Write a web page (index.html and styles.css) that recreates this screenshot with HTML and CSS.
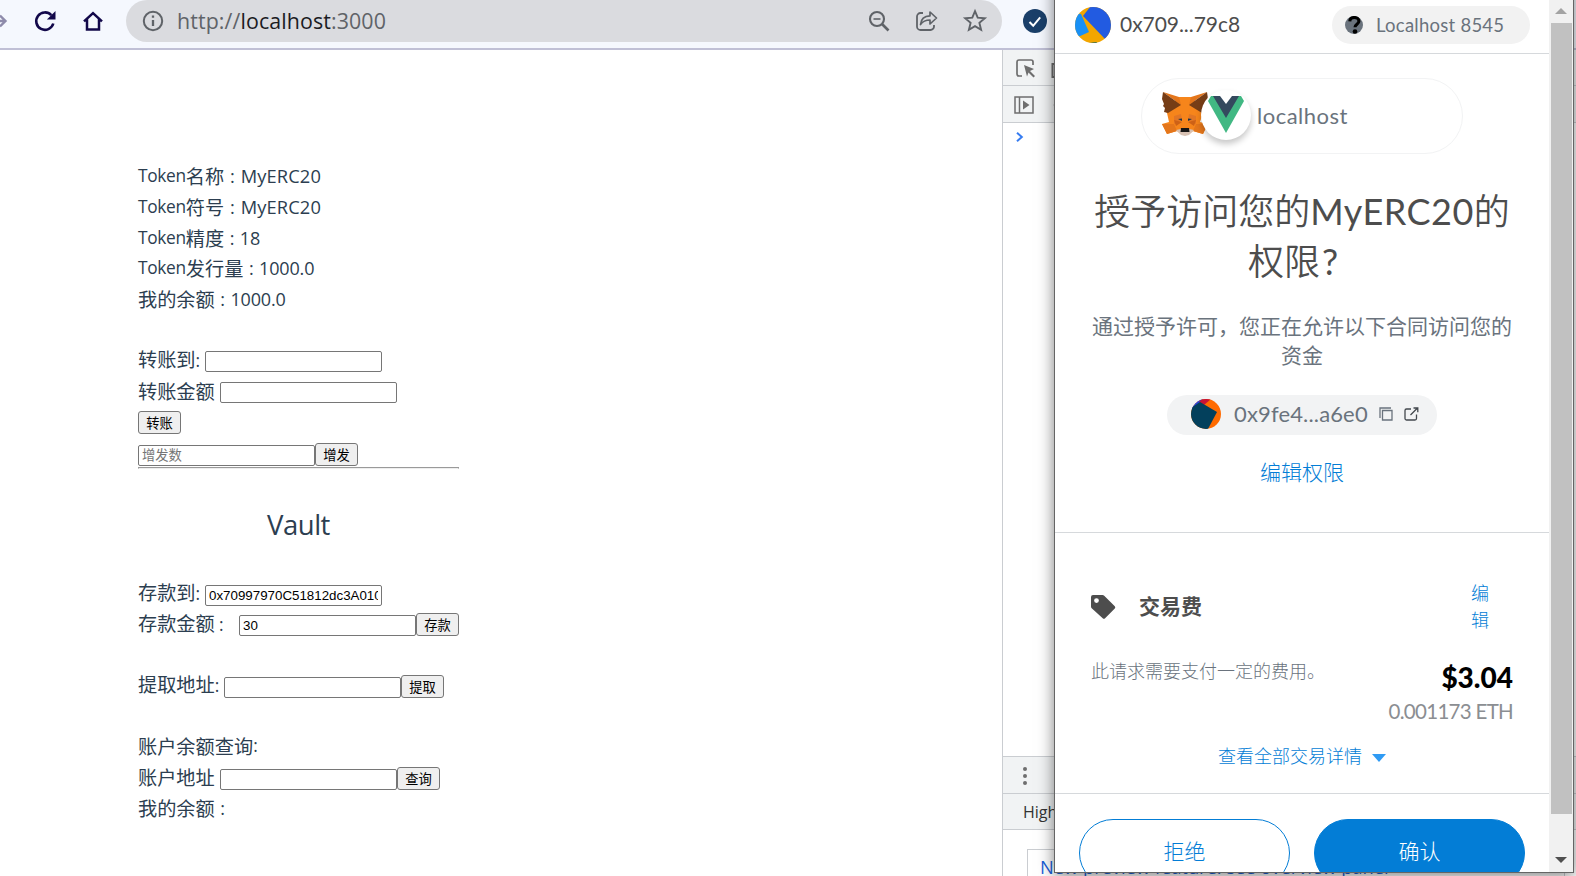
FILE: index.html
```html
<!DOCTYPE html>
<html lang="zh-CN">
<head>
<meta charset="utf-8">
<title>Vault</title>
<link rel="stylesheet" href="styles.css">
</head>
<body>
<div class="screen">
  <header class="toolbar">
    <svg class="nav-icons" width="126" height="48" viewBox="0 0 126 48" fill="none">
      <path d="M-6 21H5M0 15.500l5.500 5.500-5.500 5.500" stroke="#8e8bab" stroke-width="2.400"/>
      <path d="M53.300 23.500A8.700 8.700 0 1 1 51.300 15.200" stroke="#12084a" stroke-width="2.600"/>
      <path d="M55.500 11v8.600h-8.600z" fill="#12084a"/>
      <path d="M84 21.300l9-8.200 9 8.200M87 19v10.600h12V19" stroke="#12084a" stroke-width="2.500"/>
    </svg>
    <div class="omnibox">
      <svg width="22" height="22" viewBox="0 0 22 22" fill="none"><circle cx="11" cy="11" r="9.200" stroke="#5f6368" stroke-width="2"/><path d="M11 10v6M11 5.500v2.300" stroke="#5f6368" stroke-width="2.300"/></svg>
      <span class="url">http://<b>localhost</b>:3000</span>
      <svg class="omni-actions" width="122" height="26" viewBox="0 0 122 26" fill="none" stroke="#5f6368">
        <circle cx="9" cy="11" r="7" stroke-width="2.100"/><path d="M5.500 11h7" stroke-width="1.600"/><path d="M14 16l6.500 6.500" stroke-width="2.600"/>
        <path d="M55 5h-2.500a3.500 3.500 0 0 0-3.500 3.500v10a3.500 3.500 0 0 0 3.500 3.500h10a3.500 3.500 0 0 0 3.500-3.500V17" stroke-width="1.800"/>
        <path d="M52.500 16.500c.5-5.500 3.500-8.500 9.500-8.700V4l6.500 6-6.500 6v-4c-4 0-7 1-9.500 4.500z" stroke-width="1.700" stroke-linejoin="round"/>
        <path d="M107 3.200l2.700 6.500 7.100.6-5.400 4.600 1.700 6.900-6.100-3.700-6.100 3.700 1.700-6.900-5.400-4.600 7.100-.6z" stroke-width="1.900"/>
      </svg>
    </div>
    <svg class="ext" width="24" height="24" viewBox="0 0 24 24"><circle cx="12" cy="12" r="12" fill="#1a3f69"/><path d="M6.500 13l3.700 3.800 7-8.500" fill="none" stroke="#fff" stroke-width="2"/></svg>
  </header>

  <div class="body">
    <main class="page">
      <section class="group token">
        <p><span class="lat">Token</span>名称<span class="lat wide"> : MyERC20</span></p>
        <p><span class="lat">Token</span>符号<span class="lat wide"> : MyERC20</span></p>
        <p><span class="lat">Token</span>精度<span class="lat num"> : 18</span></p>
        <p><span class="lat">Token</span>发行量<span class="lat num"> : 1000.0</span></p>
        <p>我的余额<span class="lat num"> : 1000.0</span></p>
        <p></p>
        <p><label class="w67">转账到<span class="lat">:</span></label><input></p>
        <p><label class="w82">转账金额</label><input></p>
        <p><button>转账</button></p>
        <p class="mint"><input placeholder="增发数"><button>增发</button></p>
      </section>
      <hr>
      <h2>Vault</h2>
      <section class="group vault">
        <p><label class="w67">存款到<span class="lat">:</span></label><input value="0x70997970C51812dc3A010C7d01b50e0d17dc79C8"></p>
        <p><label class="w101">存款金额<span class="lat"> :</span></label><input value="30"><button>存款</button></p>
        <p></p>
        <p><label class="w86">提取地址<span class="lat">:</span></label><input><button>提取</button></p>
        <p></p>
        <p>账户余额查询<span class="lat">:</span></p>
        <p><label class="w82">账户地址</label><input><button>查询</button></p>
        <p>我的余额<span class="lat num"> :</span></p>
      </section>
    </main>

    <aside class="devtools">
      <div class="bar bar-top">
        <svg width="40" height="34" viewBox="0 0 40 34" fill="none" stroke="#6e6e6e" stroke-width="1.700"><path d="M6 24H3a2 2 0 0 1-2-2V10a2 2 0 0 1 2-2h12a2 2 0 0 1 2 2v3"/><path d="M8 13l10 4-4 2 5 5-1.500 1.500-5-5-1.500 4z" fill="#6e6e6e" stroke="none"/><path d="M40 12h-3.500v13H40" stroke-width="2"/></svg>
      </div>
      <div class="bar bar-side">
        <svg width="48" height="20" viewBox="0 0 48 20" fill="none" stroke="#6e6e6e" stroke-width="1.500"><path d="M1 2h18v16H1zM5.500 2v16"/><path d="M9 5.500v9l6.500-4.500z" fill="#6e6e6e" stroke="none"/><circle cx="44" cy="10" r="3.500"/></svg>
      </div>
      <div class="console">
        <svg width="8" height="10" viewBox="0 0 8 10" fill="none"><path d="M1 .8L5.800 5 1 9.200" stroke="#367cf1" stroke-width="2"/></svg>
      </div>
      <div class="bar bar-menu"><i></i><i></i><i></i></div>
      <div class="bar bar-tab">Highlights</div>
      <div class="notes"><div class="note">New preview feature: see overview panel</div></div>
    </aside>
  </div>

  <div class="popup">
    <div class="wallet">
      <div class="account">
        <svg width="36" height="36" viewBox="0 0 36 36"><defs><clipPath id="av"><circle cx="18" cy="18" r="18"/></clipPath></defs><g clip-path="url(#av)"><path fill="#f3a600" d="M0 0h36v36H0z"/><path fill="#1890f5" d="M0 6l6 1 8 18-11 5-5-4z"/><path fill="#225be1" d="M15 0L8 9l22 23 8-3V0z"/><path fill="#045b5b" d="M14 36l8-1-1 2z"/></g></svg>
        <span class="acct-name">0x709...79c8</span>
        <span class="network"><svg width="18" height="18" viewBox="0 0 18 18"><circle cx="9" cy="9" r="9" fill="#6a737d"/><path d="M4.800 5.300C5 2.500 7 1.500 9.300 1.500c2.600 0 4.600 1.500 4.600 3.700 0 3-3.900 3-3.900 6" fill="none" stroke="#000" stroke-width="3.100"/><circle cx="10" cy="15.500" r="2.300"/></svg><span>Localhost 8545</span></span>
      </div>
      <div class="approve">
        <div class="origin">
          <svg class="fox" width="48" height="46" viewBox="0 0 48 46">
            <path fill="#f6851b" d="M17 6h14l11 16-3 9 7 2-4 10-10-3-5 4h-6l-5-4-10 3-5-10 7-2-2-9L5 21z"/>
            <path fill="#e4761b" d="M1 33h12l3 7-10 3zM47 33H35l-3 7 10 3z"/>
            <path fill="#e4761b" d="M2 1l18 13-2-8zM46 1L28 14l2-8z"/>
            <path fill="#763d16" d="M2 1l18 13-13 8-4-1 1-4-2-2 1-2-2-5zM46 1L28 14l13 8 4-1-1-4 2-2-1-2 2-5z"/>
            <path fill="#e27625" d="M13 25l7-2 1 6-8 4zM35 25l-7-2-1 6 8 4z"/>
            <path fill="#cd6116" d="M13 29l8 2-6 4zM35 29l-8 2 6 4z"/>
            <path fill="#d7c1b3" d="M15 39l5-1h8l5 1-5 5-4 1-4-1z"/>
            <path fill="#161616" d="M20 37h8l.5 4h-9z"/><path fill="#233447" d="M17 28l4-.5v2.500zM31 28l-4-.5v2.500z"/>
          </svg>
          <span class="vue"><svg width="38" height="38" viewBox="0 0 38 38"><path fill="#41b883" d="M4 1h7l8 15 8-15h7l3 5-18 32L1 6z"/><path fill="#34495e" d="M6 1h7l6 8 6-8h7L19 23z"/></svg></span>
          <span class="host">localhost</span>
        </div>
        <h1>授予访问您的<span>MyERC20</span>的<br>权限<span class="mark">?</span></h1>
        <p class="desc">通过授予许可，您正在允许以下合同访问您的<br>资金</p>
        <div class="contract">
          <svg width="30" height="30" viewBox="0 0 30 30"><defs><clipPath id="ct"><circle cx="15" cy="15" r="15"/></clipPath></defs><g clip-path="url(#ct)"><path fill="#ff6b00" d="M0 0h30v30H0z"/><path fill="#2a43dd" d="M0 0h12l-4 5-6 5H0z"/><path fill="#c81435" d="M11 0h9l-7 6-5-3z"/><path fill="#03405c" d="M0 9l9-6 17 10-9 17H0z"/></g></svg>
          <span class="addr">0x9fe4...a6e0</span>
          <svg class="links" width="40" height="14" viewBox="0 0 40 14" fill="none" stroke="#6a737d" stroke-width="1.300"><path d="M1 11V1h11M3.500 3.500H13V13H3.500z"/><path d="M32 2h-4.500a1.500 1.500 0 0 0-1.500 1.500v8A1.500 1.500 0 0 0 27.500 13h8.500a1.500 1.500 0 0 0 1.500-1.500V7.500M31.500 8l7-7M34.500 1h4.300v4.300" stroke="#43484d"/></svg>
        </div>
        <a class="edit-perm">编辑权限</a>
      </div>
      <div class="fees">
        <div class="fee-head">
          <svg width="25" height="25" viewBox="0 0 25 25"><path fill="#4d4d4d" fill-rule="evenodd" d="M2 0h9.500q1 0 1.700.7l10.600 10.500q1 1.200 0 2.400l-9.700 9.700q-1.200 1-2.400 0L.7 13.200Q0 12.500 0 11.500V2Q0 0 2 0zM5.500 3.200a2.400 2.400 0 1 0 0 4.800 2.400 2.400 0 0 0 0-4.800z"/></svg>
          <strong>交易费</strong>
          <a>编<br>辑</a>
        </div>
        <div class="fee-row">
          <span class="fee-note">此请求需要支付一定的费用。</span>
          <div class="amounts"><b>$3.04</b><span>0.001173 ETH</span></div>
        </div>
        <a class="details">查看全部交易详情<i></i></a>
      </div>
      <div class="footer"><a class="btn reject">拒绝</a><a class="btn confirm">确认</a></div>
    </div>
    <div class="scrollbar"><i class="up"></i><div class="thumb"></div><i class="down"></i></div>
  </div>
</div>
</body>
</html>
```
FILE: styles.css
```css
* { box-sizing: border-box; }
body { margin: 0; background: #fff; font-family: "Noto Sans CJK SC", sans-serif; }
p, h1, h2 { margin: 0; font-weight: 400; }
svg { flex: none; display: block; }

.screen { position: relative; width: 1576px; height: 876px; overflow: hidden; display: flex; flex-direction: column; }

.toolbar { height: 50px; flex: none; display: flex; background: #f5f8fe; border-bottom: 2px solid #c0c0d6; }
.omnibox { width: 876px; height: 42px; flex: none; display: flex; align-items: center; padding: 0 12px 0 16px; background: #dadbdf; border-radius: 21px; }
.url { margin-left: 13px; font: 21.400px/42px "Open Sans", sans-serif; letter-spacing: .1px; color: #5f6368; }
.url b { font-weight: 400; color: #1b1c1f; }
.omni-actions { margin-left: auto; }
.ext { margin: 9px 0 0 21px; }

.body { flex: 1; min-height: 0; display: flex; }
.page { width: 1002px; flex: none; padding: 111px 0 0 138px; color: #2c3e50; }
.group { font-size: 19.200px; font-weight: 300; }
.group p { height: 30.700px; display: flex; align-items: center; white-space: pre; line-height: 30px; }
.token { height: 306px; }
.vault p { height: 30.640px; }
.lat { font-family: "Open Sans", sans-serif; font-size: 17.300px; font-weight: 400; letter-spacing: -.3px; }
.wide { font-size: 18.300px; letter-spacing: .1px; word-spacing: 1px; }
.num { font-size: 18px; letter-spacing: -.15px; word-spacing: 1px; }
.w67 { width: 67px; }
.w82 { width: 82px; }
.w101 { width: 101px; }
.w86 { width: 86px; }
.group input { width: 177px; height: 21px; margin: 3px 0 0; padding: 1px 3px; border: 1px solid #767676; border-radius: 2px; background: #fff; color: #000; font: 13.333px "Liberation Sans", "Noto Sans CJK SC", sans-serif; }
.vault input { margin-top: 4px; }
.group input::placeholder { color: #757575; font: 400 13.300px "Noto Sans CJK SC", sans-serif; }
.group button { width: 43px; height: 23px; margin: 2px 0 0; padding: 0; border: 1px solid #767676; border-radius: 3px; background: #efefef; color: #000; font: 400 13.300px/19px "Noto Sans CJK SC", sans-serif; }
.group.token .mint input { margin-top: 5px; }
.mint button { margin-top: 4px; }
hr { width: 321px; height: 2px; margin: 0; border: 1px solid #9a9a9a; border-bottom-color: #eee; }
h2 { width: 321px; height: 109px; text-align: center; font: 27.500px/111px "Open Sans", sans-serif; letter-spacing: -.5px; }

.devtools { flex: 1; min-width: 0; display: flex; flex-direction: column; border-left: 1px solid #cacdd1; color: #333; font-family: "Open Sans", sans-serif; }
.bar { flex: none; display: flex; background: #f1f3f4; border-bottom: 1px solid #cacdd1; }
.bar-top { height: 36px; padding: 2px 0 0 13px; }
.bar-side { height: 37px; align-items: center; padding: 1px 0 0 11px; }
.console { flex: 1; padding: 9px 0 0 13px; }
.bar-menu { height: 38px; flex-direction: column; gap: 3px; align-items: flex-start; padding: 10px 0 0 20px; border-top: 1px solid #cacdd1; }
.bar-menu i { width: 4px; height: 4px; border-radius: 50%; background: #6e6e6e; }
.bar-tab { height: 36px; padding-left: 20px; font-size: 16px; line-height: 36px; }
.notes { height: 46px; padding: 19px 11px 0 24px; }
.note { height: 34px; padding: 0 0 0 12px; border: 1px solid #cacdd1; color: #1a5fd8; font-size: 18.300px; line-height: 33px; white-space: nowrap; }

.popup { position: absolute; left: 1054px; top: -20px; width: 520px; height: 892.500px; display: flex; padding-top: 19px; background: #fff; border: 1px solid #656565; box-shadow: 0 3px 15px rgba(0, 0, 0, .5); overflow: hidden; }
.wallet { width: 494px; flex: none; font-family: Lato, "Noto Sans CJK SC", sans-serif; font-weight: 300; }
.account { height: 54px; display: flex; align-items: center; padding: 0 19px 3px 20px; border-bottom: 1px solid #d6d9dc; }
.acct-name { margin: -3px 0 0 9px; color: #4d4d4d; font-size: 21px; font-weight: 400; letter-spacing: -.05px; }
.network { width: 198px; height: 38px; margin-left: auto; display: flex; align-items: center; gap: 13px; padding: 0 0 1px 13px; border-radius: 19px; background: #f2f2f2; color: #6a737d; font-size: 18.500px; letter-spacing: .25px; font-weight: 400; }
.approve { height: 479px; display: flex; flex-direction: column; align-items: center; border-bottom: 1px solid #d6d9dc; padding-top: 24px; }
.origin { width: 322px; height: 76px; display: flex; align-items: center; padding-left: 19px; border: 1px solid #f2f3f4; border-radius: 38px; }
.fox { margin-top: -4px; }
.vue { width: 50px; height: 50px; display: flex; align-items: center; justify-content: center; margin: -3px 6px 0 -8px; padding-bottom: 2px; border-radius: 50%; background: #fff; box-shadow: 0 4px 6px rgba(0, 0, 0, .22); }
.host { margin-top: -2px; font-size: 22px; font-weight: 400; letter-spacing: .5px; color: #6a737d; }
h1 { margin-top: 32px; color: #4d4d4d; font-size: 36px; font-weight: 350; line-height: 50px; text-align: center; white-space: nowrap; }
h1 span { font-weight: 400; letter-spacing: .5px; }
h1 .mark { display: inline-block; width: 36px; padding-left: 2px; text-align: left; }
.desc { margin-top: 25px; color: #6a737d; font-size: 21px; line-height: 29px; text-align: center; white-space: nowrap; }
.contract { width: 270px; height: 40px; margin-top: 26px; display: flex; align-items: center; padding: 0 0 2px 24px; border-radius: 20px; background: #f2f3f4; }
.addr { width: 146px; padding: 0 0 2px 13px; flex: none; color: #6a737d; font-size: 22px; font-weight: 400; letter-spacing: .15px; white-space: nowrap; }
.links { margin-left: 12px; }
.edit-perm { margin-top: 21px; color: #037dd6; font-size: 21px; line-height: 32px; }
.fees { height: 261px; padding: 47px 36px 0 36px; border-bottom: 1px solid #d6d9dc; }
.fee-head { height: 54px; display: flex; align-items: center; }
.fee-head strong { margin: -4px 0 0 23px; color: #4d4d4d; font-size: 21px; font-weight: 700; }
.fee-head a { margin: 0 24px 0 auto; color: #037dd6; font-size: 18px; line-height: 27px; }
.fee-row { display: flex; justify-content: space-between; padding-top: 24px; height: 96px; }
.fee-note { color: #6a737d; font-size: 18px; line-height: 26px; }
.amounts { display: flex; flex-direction: column; align-items: flex-end; white-space: nowrap; }
.amounts b { color: #000; font-size: 28px; font-weight: 900; line-height: 38px; }
.amounts span { color: #8b8e92; font-size: 20.500px; font-weight: 400; letter-spacing: -.7px; line-height: 30px; }
.details { display: flex; align-items: center; justify-content: center; color: #037dd6; font-size: 18px; line-height: 52px; }
.details i { margin: 3px 0 0 10px; border: 7px solid transparent; border-top: 8px solid #2f9bf4; border-bottom: 0; }
.footer { height: 79px; display: flex; gap: 24px; padding: 25px 24px 0; }
.btn { width: 211px; height: 68px; flex: none; border: 1px solid #037dd6; border-radius: 34px; color: #037dd6; font-size: 21px; line-height: 62px; text-align: center; }
.confirm { background: #037dd6; color: #fff; }
.scrollbar { flex: 1; display: flex; flex-direction: column; align-items: center; background: #f1f1f1; }
.scrollbar .up { margin-top: 8px; border: 6px solid transparent; border-bottom: 6px solid #a3a3a3; border-top: 0; }
.thumb { width: 21px; height: 791px; margin-top: 9px; background: #c1c1c1; }
.scrollbar .down { margin-top: 43px; border: 6px solid transparent; border-top: 6px solid #505050; border-bottom: 0; }
```
